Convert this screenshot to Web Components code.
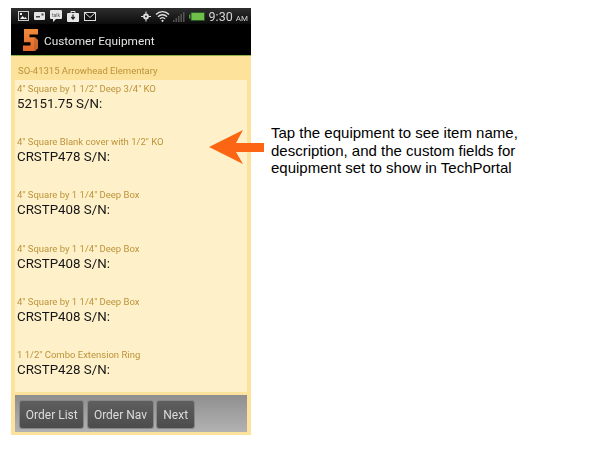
<!DOCTYPE html>
<html>
<head>
<meta charset="utf-8">
<title>Customer Equipment</title>
<style>
html,body{margin:0;padding:0;background:#fff;}
body{width:612px;height:452px;overflow:hidden;font-family:"Roboto",sans-serif;}
</style>
</head>
<body>
<tp-screen>
	<tp-phone>
		<tp-statusbar></tp-statusbar>
		<tp-titlebar>Customer Equipment</tp-titlebar>
		<tp-order>SO-41315 Arrowhead Elementary</tp-order>
		<tp-list>
			<tp-item name='4" Square by 1 1/2" Deep 3/4" KO' code="52151.75 S/N:"></tp-item>
			<tp-item name='4" Square Blank cover with 1/2" KO' code="CRSTP478 S/N:"></tp-item>
			<tp-item name='4" Square by 1 1/4" Deep Box' code="CRSTP408 S/N:"></tp-item>
			<tp-item name='4" Square by 1 1/4" Deep Box' code="CRSTP408 S/N:"></tp-item>
			<tp-item name='4" Square by 1 1/4" Deep Box' code="CRSTP408 S/N:"></tp-item>
			<tp-item name='1 1/2" Combo Extension Ring' code="CRSTP428 S/N:"></tp-item>
		</tp-list>
		<tp-footer>
			<tp-button>Order List</tp-button>
			<tp-button>Order Nav</tp-button>
			<tp-button>Next</tp-button>
		</tp-footer>
	</tp-phone>
	<tp-callout>Tap the equipment to see item name,<br>description, and the custom fields for<br>equipment set to show in TechPortal</tp-callout>
</tp-screen>

<script>
'use strict';

// small helper, every element here just stamps a static shadow root
class tpBase extends HTMLElement {
	constructor(){
		super();
		this.attachShadow({mode: 'open'});
		this.shadowRoot.innerHTML = this.Template;
	}
}

class tpScreen extends tpBase {
	get Template(){
		return `<style>
:host{display:flex;position:relative;align-items:flex-start;padding:8px 0 0 11px;box-sizing:border-box;width:612px;height:452px;}
</style><slot></slot>`;
	}
}

class tpPhone extends tpBase {
	get Template(){
		return `<style>
/* the reference is an upscaled phone capture, so it is a bit soft */
:host{display:flex;flex-direction:column;width:240px;height:427px;background:#fde29c;flex:none;filter:blur(.35px);}
</style><slot></slot>`;
	}
}

class tpStatusbar extends tpBase {
	get Template(){
		return `<style>
:host{display:flex;align-items:center;height:16px;background:linear-gradient(#2e2e2e,#0c0c0c);flex:none;padding:0 3px 0 7px;box-sizing:border-box;color:#d8d8d8;}
svg{display:block;flex:none;}
.left{display:flex;align-items:center;gap:5px;}
.right{display:flex;align-items:center;margin-left:auto;}
.time{font:12.500px "Roboto",sans-serif;color:#d4d4d4;margin-left:4px;white-space:nowrap;}
.time small{font-size:8px;}
</style>
<div class="left">
	<svg width="11" height="10" viewBox="0 0 11 10"><rect x=".5" y=".5" width="10" height="9" fill="#222" stroke="#ccc"/><path d="M2 8l2.500-3 2 2 1-1 1.500 2z" fill="#eee"/><rect x="2" y="2" width="2" height="2" fill="#eee"/></svg>
	<svg width="11" height="8" viewBox="0 0 11 8"><rect width="11" height="8" rx="1" fill="#e4e4e4"/><rect x="2" y="4" width="4" height="1.500" fill="#444"/><rect x="7.500" y="1.500" width="2" height="2" fill="#444"/></svg>
	<svg width="12" height="12" viewBox="0 0 12 12"><path d="M1 0h10a1 1 0 0 1 1 1v7a1 1 0 0 1-1 1H6l-3 3V9H1a1 1 0 0 1-1-1V1a1 1 0 0 1 1-1z" fill="#e6e6e6"/><text x="6" y="6.500" font-family="Roboto" font-size="5" text-anchor="middle" fill="#555">talk</text></svg>
	<svg width="12" height="12" viewBox="0 0 12 12"><path d="M4 3V1.500h4V3" fill="none" stroke="#e6e6e6"/><rect y="3" width="12" height="9" rx="1" fill="#e6e6e6"/><path d="M6 4.500v4M4.300 7L6 9l1.700-2" fill="none" stroke="#222" stroke-width="1.200"/></svg>
	<svg width="12" height="9" viewBox="0 0 12 9"><rect x=".5" y=".5" width="11" height="8" fill="#111" stroke="#ddd"/><path d="M.5 .5l5.500 5 5.500-5" fill="none" stroke="#ddd"/></svg>
</div>
<div class="right">
	<svg width="10" height="11" viewBox="0 0 12 12"><circle cx="6" cy="6" r="3.500" fill="#ddd"/><circle cx="6" cy="6" r="1.300" fill="#333"/><path d="M6 0v3M6 9v3M0 6h3M9 6h3" stroke="#ddd" stroke-width="1.300"/></svg>
	<svg width="15" height="12" viewBox="0 0 15 12" style="margin-left:4px"><path d="M1 4.500a9 9 0 0 1 13 0M3 6.800a6 6 0 0 1 9 0M5 9a3 3 0 0 1 5 0" fill="none" stroke="#e2e2e2" stroke-width="1.300"/><circle cx="7.500" cy="10.800" r="1.100" fill="#e2e2e2"/></svg>
	<svg width="12" height="11" viewBox="0 0 12 11" style="margin-left:3px"><path d="M0 9h1.500v2H0zM2.500 7H4v4H2.500zM5 5h1.500v6H5zM7.500 3H9v8H7.500zM10 1h1.500v10H10z" fill="#555"/></svg>
	<svg width="16" height="9" viewBox="0 0 16 9" style="margin-left:4px"><rect x="0" y="2.500" width="1.500" height="4" fill="#5f8f4a"/><rect x="1.500" y="0" width="14.500" height="9" rx="1" fill="#2c5a26"/><rect x="2.500" y="1" width="12.500" height="7" fill="#6fc04a"/></svg>
	<span class="time">9:30 <small>AM</small></span>
</div>`;
	}
}

class tpTitlebar extends tpBase {
	get Template(){
		return `<style>
:host{display:flex;align-items:center;background:#000;border-bottom:1px solid #8eb24a;flex:none;padding:1px 0 0 12px;box-sizing:border-box;height:32px;color:#e4e4e4;font:11.800px "Roboto",sans-serif;}
svg{display:block;margin-right:6px;flex:none;}
span{position:relative;top:1px;}
</style>
<svg width="15" height="22" viewBox="0 0 15 24" preserveAspectRatio="none"><defs><linearGradient id="g" x1="0" y1="0" x2="0" y2="1"><stop offset="0" stop-color="#f08b3c"/><stop offset="1" stop-color="#e2662a"/></linearGradient></defs><path d="M1 0H15V6H6.500V9H12L15 12V21L12 24H0V18H7.500V14.500H1Z" fill="url(#g)"/><path d="M11 9h1l3 3v9l-3 3h-1z" fill="#8a4a22" opacity=".3"/></svg>
<span><slot></slot></span>`;
	}
}

class tpOrder extends tpBase {
	get Template(){
		return `<style>
:host{display:flex;align-items:center;height:24px;padding:4px 0 0 7px;box-sizing:border-box;flex:none;color:#bd9339;font:9.500px "Roboto",sans-serif;}
</style><slot></slot>`;
	}
}

class tpList extends tpBase {
	get Template(){
		return `<style>
:host{display:flex;flex-direction:column;height:312px;margin:0 4px;background:#fef0c9;flex:none;overflow:hidden;}
</style><slot></slot>`;
	}
}

class tpItem extends tpBase {
	get Template(){
		return `<style>
:host{display:block;height:53.200px;padding:3px 0 0 2px;box-sizing:border-box;flex:none;}
.name{color:#bd9339;font:9.500px/11px "Roboto",sans-serif;white-space:nowrap;}
.code{color:#151515;font:13.300px/18px "Roboto",sans-serif;white-space:nowrap;margin-top:1px;}
</style><div class="name"></div><div class="code"></div>`;
	}
	connectedCallback(){
		this.shadowRoot.querySelector('.name').textContent = this.getAttribute('name');
		this.shadowRoot.querySelector('.code').textContent = this.getAttribute('code');
	}
}

class tpFooter extends tpBase {
	get Template(){
		return `<style>
:host{display:flex;align-items:center;gap:4.600px;height:37px;margin:3px 4px 0 4px;padding:2px 0 0 5px;box-sizing:border-box;background:linear-gradient(#8f8f8f,#b2b2b2);flex:none;}
</style><slot></slot>`;
	}
}

class tpButton extends tpBase {
	get Template(){
		return `<style>
:host{display:flex;align-items:center;justify-content:center;height:27px;padding:0 5.800px;border-radius:2px;background:linear-gradient(#5e5e5e,#4c4c4c);box-shadow:0 0 0 1px #868686;color:#dcdcdc;font:12px "Roboto",sans-serif;white-space:nowrap;}
</style><slot></slot>`;
	}
}

class tpCallout extends tpBase {
	get Template(){
		return `<style>
:host{display:block;margin:116px 0 0 20px;color:#000;font:15px/17.600px "Liberation Sans",Arial,sans-serif;white-space:nowrap;}
svg{position:absolute;left:209px;top:129px;}
</style>
<svg width="56" height="36" viewBox="0 0 56 36"><path d="M0 18L34 1 27 14H55V23H27L34 35z" fill="#fb6514"/></svg>
<slot></slot>`;
	}
}

customElements.define('tp-screen',tpScreen);
customElements.define('tp-phone',tpPhone);
customElements.define('tp-statusbar',tpStatusbar);
customElements.define('tp-titlebar',tpTitlebar);
customElements.define('tp-order',tpOrder);
customElements.define('tp-list',tpList);
customElements.define('tp-item',tpItem);
customElements.define('tp-footer',tpFooter);
customElements.define('tp-button',tpButton);
customElements.define('tp-callout',tpCallout);
</script>
</body>
</html>
